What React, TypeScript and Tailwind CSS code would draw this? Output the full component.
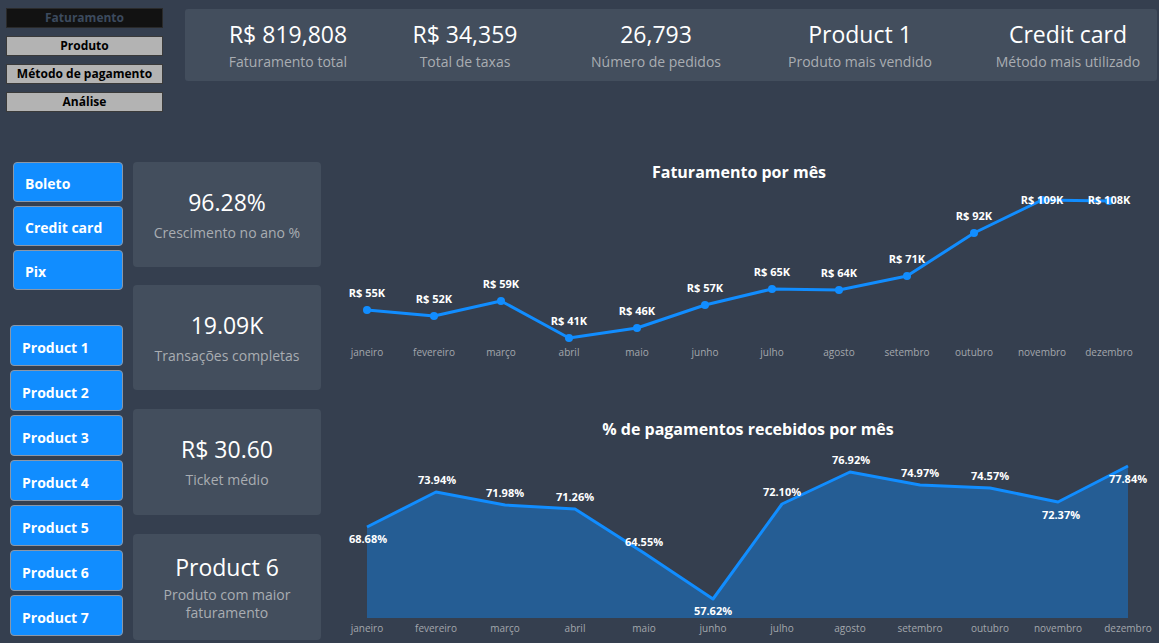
import React from 'react';

const months = ['janeiro', 'fevereiro', 'março', 'abril', 'maio', 'junho', 'julho', 'agosto', 'setembro', 'outubro', 'novembro', 'dezembro'];

// page coordinates (svg viewBox matches page pixels)
const revenue = [
  { x: 367, y: 310, label: 'R$ 55K', ly: 297 },
  { x: 434, y: 316, label: 'R$ 52K', ly: 303 },
  { x: 501, y: 301, label: 'R$ 59K', ly: 288 },
  { x: 569, y: 338, label: 'R$ 41K', ly: 325 },
  { x: 637, y: 328, label: 'R$ 46K', ly: 315 },
  { x: 705, y: 305, label: 'R$ 57K', ly: 292 },
  { x: 772, y: 289, label: 'R$ 65K', ly: 276 },
  { x: 839, y: 290, label: 'R$ 64K', ly: 277 },
  { x: 907, y: 276, label: 'R$ 71K', ly: 263 },
  { x: 974, y: 233, label: 'R$ 92K', ly: 220 },
  { x: 1042, y: 200, label: 'R$ 109K', ly: 204 },
  { x: 1109, y: 201, label: 'R$ 108K', ly: 204 },
];

const paid = [
  { x: 367, y: 527, label: '68.68%', lx: 368, ly: 543 },
  { x: 436, y: 492, label: '73.94%', lx: 437, ly: 484 },
  { x: 505, y: 505, label: '71.98%', lx: 505, ly: 497 },
  { x: 575, y: 509, label: '71.26%', lx: 575, ly: 501 },
  { x: 644, y: 553, label: '64.55%', lx: 644, ly: 546 },
  { x: 713, y: 599, label: '57.62%', lx: 713, ly: 615 },
  { x: 782, y: 504, label: '72.10%', lx: 782, ly: 496 },
  { x: 850, y: 472, label: '76.92%', lx: 851, ly: 464 },
  { x: 920, y: 485, label: '74.97%', lx: 920, ly: 477 },
  { x: 990, y: 488, label: '74.57%', lx: 990, ly: 480 },
  { x: 1058, y: 502, label: '72.37%', lx: 1061, ly: 519 },
  { x: 1128, y: 466, label: '77.84%', lx: 1128, ly: 483 },
];

const kpis = [
  ['R$ 819,808', 'Faturamento total', 'w-[206px]'],
  ['R$ 34,359', 'Total de taxas', 'w-[148px]'],
  ['26,793', 'Número de pedidos', 'w-[234px]'],
  ['Product 1', 'Produto mais vendido', 'w-[174px]'],
  ['Credit card', 'Método mais utilizado', 'w-[242px]'],
];

const font = { fontFamily: '"Open Sans", "Noto Sans", sans-serif' };

const App: React.FC = () => {
  const revLine = revenue.map((p) => `${p.x},${p.y}`).join(' ');
  const paidLine = paid.map((p) => `${p.x},${p.y}`).join(' ');
  const paidArea = `367,618 ${paidLine} 1128,618`;

  return (
    <div className="w-[1159px] h-[643px] bg-[#353f4f] flex flex-col overflow-hidden font-['Open_Sans',_'Noto_Sans',_sans-serif]">
      {/* Header */}
      <div className="h-[155px] flex items-start pt-[8px] pl-[6px]">
        <div className="w-[157px] shrink-0 flex flex-col gap-[8px] text-[12px] font-bold">
          <div className="h-[20px] bg-[#121212] border border-[#2a2a2a] text-[#3c4a5e] flex items-center justify-center">Faturamento</div>
          <div className="h-[20px] bg-[#b3b3b3] border border-[#3a3a3a] text-black flex items-center justify-center">Produto</div>
          <div className="h-[20px] bg-[#b3b3b3] border border-[#3a3a3a] text-black flex items-center justify-center">Método de pagamento</div>
          <div className="h-[20px] bg-[#b3b3b3] border border-[#3a3a3a] text-black flex items-center justify-center">Análise</div>
        </div>

        {/* KPI strip */}
        <div className="ml-[22px] mt-[1px] h-[72px] w-[972px] shrink-0 bg-[#434e5d] rounded-[3px] flex items-center">
          {kpis.map(([v, l, w]) => (
            <div key={l} className={`${w} shrink-0 flex flex-col items-center`}>
              <div className="text-[23px] leading-[30px] text-white">{v}</div>
              <div className="text-[14px] leading-[20px] text-[#a9adb2] mt-[3px]">{l}</div>
            </div>
          ))}
        </div>
      </div>

      {/* Body */}
      <div className="flex h-[488px]">
        {/* Buttons column */}
        <div className="w-[133px] flex flex-col">
          <div className="pl-[13px] pt-[7px] flex flex-col gap-[4px]">
            {['Boleto', 'Credit card', 'Pix'].map((b) => (
              <div key={b} className="w-[110px] h-[40px] bg-[#118dff] border border-[#8a97a8] rounded-[4px] text-white font-bold text-[14px] pl-[11px] pt-[2px] flex items-center">
                {b}
              </div>
            ))}
          </div>
          <div className="pl-[10px] mt-[35px] flex flex-col gap-[4px]">
            {[1, 2, 3, 4, 5, 6, 7].map((n) => (
              <div key={n} className="w-[113px] h-[41px] bg-[#118dff] border border-[#8a97a8] rounded-[4px] text-white font-bold text-[14px] pl-[11px] pt-[3px] flex items-center">
                Product {n}
              </div>
            ))}
          </div>
        </div>

        {/* Cards column */}
        <div className="w-[188px] flex flex-col pt-[7px]">
          <div className="h-[105px] bg-[#434e5d] rounded-[4px] flex flex-col items-center justify-center">
            <div className="text-[23px] leading-[30px] text-white">96.28%</div>
            <div className="text-[14px] leading-[20px] text-[#a9adb2] mt-[6px]">Crescimento no ano %</div>
          </div>
          <div className="h-[105px] mt-[18px] bg-[#434e5d] rounded-[4px] flex flex-col items-center justify-center">
            <div className="text-[23px] leading-[30px] text-white">19.09K</div>
            <div className="text-[14px] leading-[20px] text-[#a9adb2] mt-[6px]">Transações completas</div>
          </div>
          <div className="h-[106px] mt-[19px] bg-[#434e5d] rounded-[4px] flex flex-col items-center justify-center">
            <div className="text-[23px] leading-[30px] text-white">R$ 30.60</div>
            <div className="text-[14px] leading-[20px] text-[#a9adb2] mt-[6px]">Ticket médio</div>
          </div>
          <div className="h-[106px] mt-[19px] bg-[#434e5d] rounded-[4px] flex flex-col items-center justify-center">
            <div className="text-[23px] leading-[30px] text-white">Product 6</div>
            <div className="text-[14px] leading-[18px] text-[#a9adb2] mt-[4px] text-center w-[140px]">Produto com maior faturamento</div>
          </div>
        </div>

        {/* Charts column */}
        <div className="w-[838px] flex flex-col">
          <svg width="838" height="215" viewBox="321 155 838 215" style={font}>
            <text x="739" y="178" textAnchor="middle" fill="#fff" fontSize="16" fontWeight="700">Faturamento por mês</text>
            <polyline points={revLine} fill="none" stroke="#118dff" strokeWidth="3" strokeLinejoin="round" />
            {revenue.map((p) => (
              <circle key={p.x} cx={p.x} cy={p.y} r="4" fill="#118dff" />
            ))}
            {revenue.map((p) => (
              <text key={p.label} x={p.x} y={p.ly} textAnchor="middle" fill="#fff" fontSize="11" fontWeight="700">{p.label}</text>
            ))}
            {months.map((m, i) => (
              <text key={m} x={revenue[i].x} y="356" textAnchor="middle" fill="#a3a7ad" fontSize="10">{m}</text>
            ))}
          </svg>
          <svg width="838" height="233" viewBox="321 410 838 233" className="mt-[40px]" style={font}>
            <text x="748" y="435" textAnchor="middle" fill="#fff" fontSize="16" fontWeight="700">% de pagamentos recebidos por mês</text>
            <polygon points={paidArea} fill="#255d94" />
            <polyline points={paidLine} fill="none" stroke="#118dff" strokeWidth="3" strokeLinejoin="round" />
            {paid.map((p) => (
              <text key={p.label} x={p.lx} y={p.ly} textAnchor="middle" fill="#fff" fontSize="11" fontWeight="700">{p.label}</text>
            ))}
            {months.map((m, i) => (
              <text key={m} x={paid[i].x} y="632" textAnchor="middle" fill="#a3a7ad" fontSize="10">{m}</text>
            ))}
          </svg>
        </div>
      </div>
    </div>
  );
};

export default App;
